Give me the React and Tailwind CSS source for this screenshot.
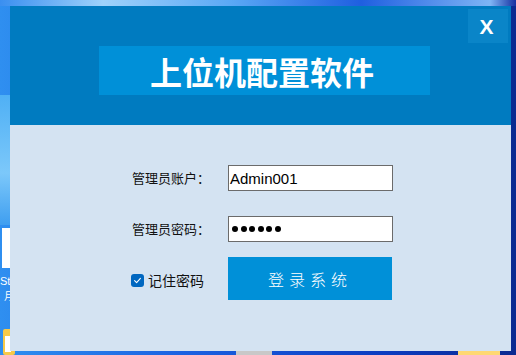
import React from "react";

const cjk = { fontFamily: '"Noto Sans CJK SC", "Noto Sans", sans-serif' };

function Dots() {
  return (
    <div className="flex items-center gap-[2.6px] pl-[3px]">
      {[0, 1, 2, 3, 4, 5].map((i) => (
        <span key={i} className="block w-[6px] h-[6px] rounded-full bg-black" />
      ))}
    </div>
  );
}

export default function App() {
  return (
    <div className="relative w-[516px] h-[355px] overflow-hidden bg-[linear-gradient(90deg,#2f8ff0_0%,#1b62e2_35%,#0c3cc0_75%,#0a2a90_100%)]">
      {/* desktop bits */}
      <div className="absolute left-0 top-0 w-[516px] h-[6px] bg-[linear-gradient(90deg,#3a8ff0,#9fd2fb_20%,#5aa8f5_45%,#1f5fe0_70%,#7fb5f5_95%,#1530a0)]" />
      <div className="absolute left-0 top-[95px] w-[10px] h-[130px] bg-[linear-gradient(180deg,#4fb0f5,#7cc8fa_60%,#3f9ef0)]" />
      <div className="absolute left-[2px] top-[228px] w-[8px] h-[40px] bg-white" />
      <div className="absolute left-0 top-[275px] h-[12px] text-white text-[11px] leading-[12px] overflow-hidden" style={{ fontFamily: '"Liberation Sans", Arial, sans-serif' }}>St</div>
      <div className="absolute left-[4px] top-[290px] h-[12px] text-white text-[10px] leading-[12px] overflow-hidden" style={cjk}>月</div>
      <div className="absolute left-[3px] top-[329px] w-[12px] h-[26px] rounded-[2px] bg-[#f7c948]" />
      <div className="absolute left-[5px] top-[336px] w-[6px] h-[16px] bg-white" />
      <div className="absolute left-[458px] top-[351px] w-[42px] h-[4px] bg-[#ffd873]" />
      <div className="absolute left-[236px] top-[351px] w-[36px] h-[4px] bg-[#c8c8c8]" />

      {/* dialog window */}
      <div className="absolute left-[10px] top-[6px] w-[501px] h-[345px] flex flex-col">
        <div className="relative h-[119px] bg-[#007bc0] flex justify-start items-start">
          <div className="ml-[89px] mt-[40px] w-[331px] h-[49px] bg-[#0090d8] flex items-center justify-center">
            <span className="text-white text-[32px] font-bold leading-none -ml-[5px]" style={cjk}>
              上位机配置软件
            </span>
          </div>
          <div className="absolute left-[458px] top-[3px] w-[40px] h-[34px] bg-[#0a85c8] flex items-center justify-center">
            <span className="text-white text-[21px] font-bold leading-none -ml-[3px]" style={{ fontFamily: '"Liberation Sans", Arial, sans-serif' }}>
              X
            </span>
          </div>
        </div>

        <div className="flex-1 bg-[#d4e3f2] pt-[40px] pl-[121px] flex flex-col">
          <div className="flex items-center h-[26px]">
            <div className="w-[97px] text-[13px] text-[#111] pl-[1px]" style={cjk}>管理员账户：</div>
            <div className="w-[165px] h-[26px] border border-[#6b6b6b] bg-white flex items-center pl-[1px]">
              <span className="text-[15px] text-black leading-none" style={{ fontFamily: '"Liberation Sans", Arial, sans-serif' }}>
                Admin001
              </span>
            </div>
          </div>

          <div className="flex items-center h-[26px] mt-[25px]">
            <div className="w-[97px] text-[13px] text-[#111] pl-[1px]" style={cjk}>管理员密码：</div>
            <div className="w-[165px] h-[26px] border border-[#6b6b6b] bg-white flex items-center">
              <Dots />
            </div>
          </div>

          <div className="flex items-center h-[43px] mt-[15px]">
            <div className="w-[97px] flex items-center pt-[3px]">
              <div className="w-[13px] h-[13px] rounded-[3px] bg-[#0067c0] flex items-center justify-center">
                <svg width="9" height="9" viewBox="0 0 9 9" fill="none">
                  <path d="M1.6 4.7 L3.6 6.6 L7.4 2.4" stroke="white" strokeWidth="1.1" strokeLinecap="round" strokeLinejoin="round" />
                </svg>
              </div>
              <span className="ml-[4px] text-[14px] text-[#111] leading-none" style={cjk}>记住密码</span>
            </div>
            <div className="w-[164px] h-[43px] bg-[#0090d8] flex items-center justify-center">
              <span className="text-white text-[16px] tracking-[5px] font-light leading-none" style={cjk}>
                登录系统
              </span>
            </div>
          </div>
        </div>
      </div>
    </div>
  );
}
